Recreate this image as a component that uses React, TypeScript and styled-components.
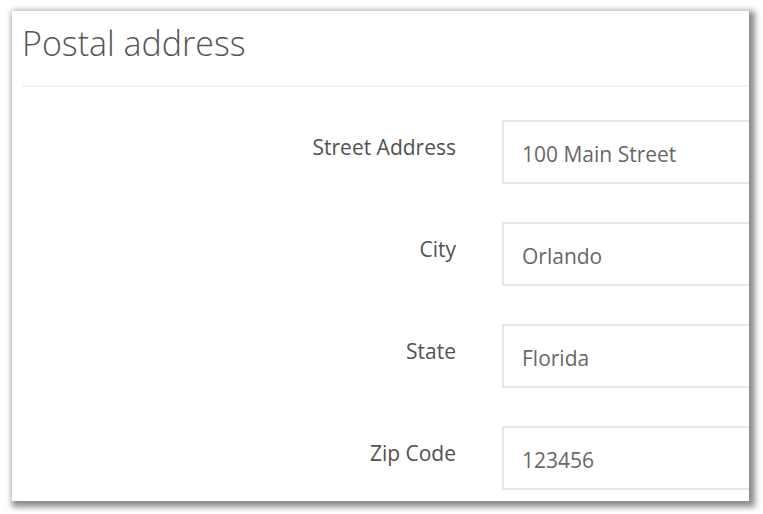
import styled, { createGlobalStyle } from 'styled-components';

const GlobalStyle = createGlobalStyle`
    html, body {
        margin: 0;
        padding: 0;
        background: #ffffff;
    }
    body {
        font-family: "Open Sans", "Liberation Sans", sans-serif;
    }
`;

const Page = styled.div`
    width: 763px;
    height: 514px;
    padding: 11px 0 0 12px;
    box-sizing: border-box;
`;

const Panel = styled.div`
    width: 737px;
    height: 490px;
    background: #ffffff;
    overflow: hidden;
    box-shadow: 3px 3px 6px 3px rgba(0, 0, 0, 0.45);
`;

const Header = styled.div`
    padding: 10px 0 0 10px;
`;

const Title = styled.h1`
    margin: 0;
    font-size: 34px;
    font-weight: 300;
    line-height: 44px;
    color: #555555;
    padding-bottom: 20px;
    border-bottom: 2px solid #f2f2f2;
`;

const Form = styled.div`
    display: grid;
    grid-template-columns: 444px 320px;
    column-gap: 46px;
    row-gap: 38px;
    padding-top: 33px;
`;

const Label = styled.label`
    text-align: right;
    font-size: 21px;
    line-height: 28px;
    color: #515151;
    padding-top: 13px;
`;

const Field = styled.div`
    height: 64px;
    box-sizing: border-box;
    border: 2px solid #e6e6e6;
    padding: 3px 18px 0;
    display: flex;
    align-items: center;
    font-size: 21px;
    color: #686868;
`;

type RowProps = {
    label: string;
    value: string;
};

function Row({ label, value }: RowProps) {
    return (
        <>
            <Label>{label}</Label>
            <Field>{value}</Field>
        </>
    );
}

export default function App() {
    return (
        <Page>
            <GlobalStyle />
            <Panel>
                <Header>
                    <Title>Postal address</Title>
                </Header>
                <Form>
                    <Row label="Street Address" value="100 Main Street" />
                    <Row label="City" value="Orlando" />
                    <Row label="State" value="Florida" />
                    <Row label="Zip Code" value="123456" />
                </Form>
            </Panel>
        </Page>
    );
}
